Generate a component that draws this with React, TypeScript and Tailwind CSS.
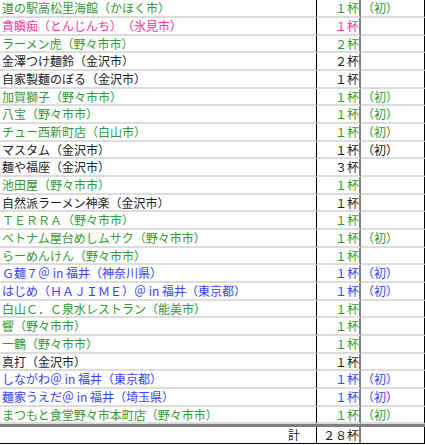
const GREEN = "text-[#339933]";
const PINK = "text-[#ff3399]";
const BLUE = "text-[#3344ff]";
const BLACK = "text-[#222222]";

type Row = { name: string; count: string; first?: boolean; color: string };

const rows: Row[] = [
  { name: "道の駅高松里海館（かほく市）", count: "１杯", first: true, color: GREEN },
  { name: "貪瞋痴（とんじんち）（氷見市）", count: "１杯", color: PINK },
  { name: "ラーメン虎（野々市市）", count: "２杯", color: GREEN },
  { name: "金澤つけ麺鈴（金沢市）", count: "２杯", color: BLACK },
  { name: "自家製麺のぼる（金沢市）", count: "１杯", color: BLACK },
  { name: "加賀獅子（野々市市）", count: "１杯", first: true, color: GREEN },
  { name: "八宝（野々市市）", count: "１杯", first: true, color: GREEN },
  { name: "チュー西新町店（白山市）", count: "１杯", first: true, color: GREEN },
  { name: "マスタム（金沢市）", count: "１杯", first: true, color: BLACK },
  { name: "麺や福座（金沢市）", count: "３杯", color: BLACK },
  { name: "池田屋（野々市市）", count: "１杯", color: GREEN },
  { name: "自然派ラーメン神楽（金沢市）", count: "１杯", color: BLACK },
  { name: "ＴＥＲＲＡ（野々市市）", count: "１杯", color: GREEN },
  { name: "ベトナム屋台めしムサク（野々市市）", count: "１杯", first: true, color: GREEN },
  { name: "らーめんけん（野々市市）", count: "１杯", color: GREEN },
  { name: "Ｇ麺７＠ in 福井（神奈川県）", count: "１杯", first: true, color: BLUE },
  { name: "はじめ（ＨＡＪＩＭＥ）＠ in 福井（東京都）", count: "１杯", first: true, color: BLUE },
  { name: "白山Ｃ．Ｃ泉水レストラン（能美市）", count: "１杯", color: GREEN },
  { name: "響（野々市市）", count: "１杯", color: GREEN },
  { name: "一鶴（野々市市）", count: "１杯", color: GREEN },
  { name: "真打（金沢市）", count: "１杯", color: BLACK },
  { name: "しながわ＠ in 福井（東京都）", count: "１杯", first: true, color: BLUE },
  { name: "麺家うえだ＠ in 福井（埼玉県）", count: "１杯", first: true, color: BLUE },
  { name: "まつもと食堂野々市本町店（野々市市）", count: "１杯", first: true, color: GREEN },
];

export default function App() {
  return (
    <div className="w-[425px] h-[445px] bg-white [font-family:'Noto_Sans_CJK_JP','Noto_Sans_CJK_SC',sans-serif] text-[12px] leading-none [text-spacing-trim:space-all]">
      <div className="flex flex-col">
        {rows.map((r, i) => (
          <div key={i} className={`flex ${i % 3 === 2 ? "h-[17px]" : "h-[18px]"} ${r.color}`}>
            <div className="w-[317px] flex items-center pl-[2px] whitespace-nowrap overflow-hidden border-r border-r-black border-b-2 border-b-[#dcdcdc]">
              {r.name}
            </div>
            <div className="w-[44px] flex items-center justify-end border-r-2 border-r-[#808080] border-b-2 border-b-[#dcdcdc]">
              {r.count}
            </div>
            <div className="w-[64px] flex items-center pl-[1px] border-r border-r-black border-b-2 border-b-[#dcdcdc]">
              {r.first ? "（初）" : ""}
            </div>
          </div>
        ))}
      </div>
      <div className="h-[3px] bg-[#808080]" />
      <div className="flex h-[17px] text-[#222222] border-b border-b-black">
        <div className="w-[317px] flex items-center justify-end pr-[16px] border-r border-r-black">計</div>
        <div className="w-[44px] flex items-center justify-end border-r-2 border-r-[#808080]">２８杯</div>
        <div className="w-[64px] border-r border-r-black" />
      </div>
    </div>
  );
}
